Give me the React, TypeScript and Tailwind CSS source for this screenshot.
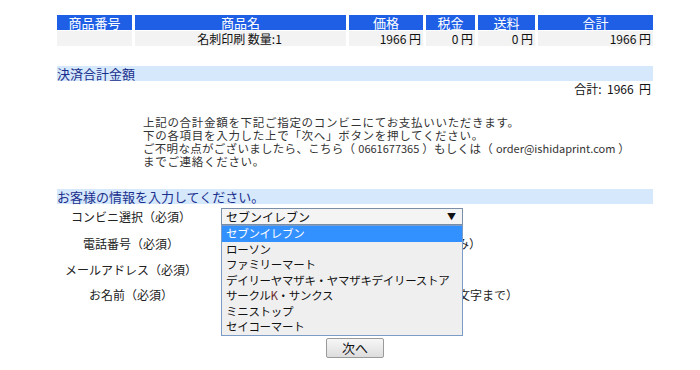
const font = "font-['MS_PGothic','Noto_Sans_CJK_JP',sans-serif]";

const items = [
  'セブンイレブン',
  'ローソン',
  'ファミリーマート',
  'デイリーヤマザキ・ヤマザキデイリーストア',
  'サークルK・サンクス',
  'ミニストップ',
  'セイコーマート',
];

const cols = [
  { label: '商品番号', w: 'w-[75px]', value: '', align: 'text-center' },
  { label: '商品名', w: 'w-[211px]', value: '名刺印刷 数量:1', align: 'text-center' },
  { label: '価格', w: 'w-[74px]', value: '1966 円', align: 'text-right' },
  { label: '税金', w: 'w-[49px]', value: '0 円', align: 'text-right' },
  { label: '送料', w: 'w-[57px]', value: '0 円', align: 'text-right' },
  { label: '合計', w: 'w-[115px]', value: '1966 円', align: 'text-right' },
];

export default function App() {
  return (
    <div className={`w-[700px] h-[370px] bg-white overflow-hidden ${font} text-[12px] text-[#222]`}>
      <div className="ml-[57px] w-[596px] pt-[15px]">
        {/* Order table */}
        <div className="flex gap-[3px]">
          {cols.map((c) => (
            <div
              key={c.label}
              className={`${c.w} h-[15px] bg-[#1f5fe6] text-white text-[13px] leading-[15px] text-center`}
            >
              {c.label}
            </div>
          ))}
        </div>
        <div className="flex gap-[3px] mt-[1px]">
          {cols.map((c) => (
            <div
              key={c.label}
              className={`${c.w} h-[15px] bg-[#f3f3f3] leading-[15px] pr-[2px] ${c.align} text-[#111]`}
            >
              {c.value}
            </div>
          ))}
        </div>

        {/* Payment total */}
        <div className="mt-[20px] h-[15px] bg-[#d5e8fc] text-[#1a2f8c] text-[13px] leading-[15px]">
          決済合計金額
        </div>
        <div className="h-[14px] leading-[14px] mt-[1px] text-right pr-[2px] text-[#111]">
          合計:&nbsp;&nbsp;1966&nbsp;&nbsp;円
        </div>

        <div className="mt-[20px] ml-[86px] text-[#333] text-[11.5px] leading-[13px] tracking-[0.7px] whitespace-nowrap">
          <p>上記の合計金額を下記ご指定のコンビニにてお支払いいただきます。</p>
          <p>下の各項目を入力した上で「次へ」ボタンを押してください。</p>
          <p className="tracking-[0.3px]">
            ご不明な点がございましたら、こちら（ <span className="text-[11px] tracking-[0px]">0661677365</span> ）もしくは（{' '}
            <span className="text-[11px] tracking-[0px]">order@ishidaprint.com</span> ）
          </p>
          <p>までご連絡ください。</p>
        </div>

        {/* Customer info */}
        <div className="mt-[21px] h-[15px] bg-[#d5e8fc] text-[#1a2f8c] text-[13px] leading-[15px]">
          お客様の情報を入力してください。
        </div>

        <div className="mt-[4px] flex flex-col gap-[10px] text-[#222] whitespace-nowrap">
          <div className="flex items-center h-[17px]">
            <div className="w-[148px] text-center">コンビニ選択（必須）</div>
            <div className="ml-[16px] relative z-10">
              <div className="w-[242px] h-[17px] border border-[#7a8ea8] bg-[#f4f4f4] flex items-center justify-between px-[4px] leading-[15px] text-[#111]">
                <span>セブンイレブン</span>
                <span className="text-[9px] mr-[2px]">▼</span>
              </div>
              <div className="absolute top-full left-0 w-[242px] border border-[#7a9cc6] bg-[#efefef] text-[#111] text-[11.5px] tracking-[-0.3px]">
                {items.map((it, i) => (
                  <div
                    key={it}
                    className={`h-[15.5px] leading-[15.5px] px-[4px] overflow-hidden ${i === 0 ? 'bg-[#3390ff] text-white' : ''}`}
                  >
                    {it === 'サークルK・サンクス' ? (
                      <>
                        サークル<span className="text-[#6b2b2b]">K</span>・サンクス
                      </>
                    ) : (
                      it
                    )}
                  </div>
                ))}
              </div>
            </div>
          </div>
          <div className="flex items-center h-[17px]">
            <div className="w-[148px] text-center">電話番号（必須）</div>
            <div className="ml-[16px] w-[260px] text-right">（半角数字のみ）</div>
          </div>
          <div className="flex items-center h-[17px] mt-[-1px]">
            <div className="w-[148px] text-center">メールアドレス（必須）</div>
          </div>
          <div className="flex items-center h-[17px] mt-[-2px]">
            <div className="w-[148px] text-center">お名前（必須）</div>
            <div className="ml-[16px] w-[297px] text-right">（全角30文字まで）</div>
          </div>
        </div>

        <div className="mt-[35px] flex justify-center">
          <button className="w-[58px] h-[20px] border border-[#9a9a9a] rounded-[2px] bg-gradient-to-b from-[#f7f7f7] to-[#dddddd] text-[13px] leading-[18px] text-[#111]">
            次へ
          </button>
        </div>
      </div>
    </div>
  );
}
